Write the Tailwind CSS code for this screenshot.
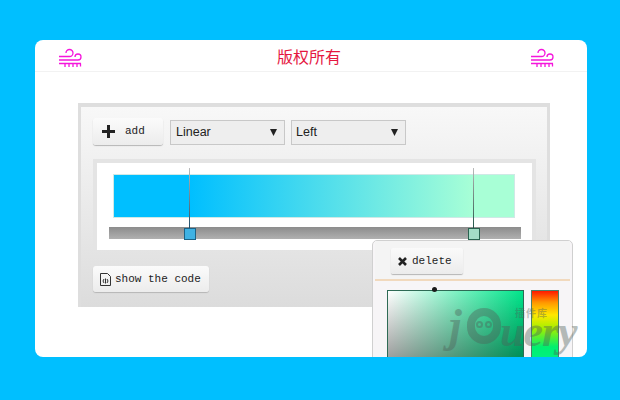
<!DOCTYPE html>
<html>
<head>
<meta charset="utf-8">
<script src="https://cdn.jsdelivr.net/npm/@tailwindcss/browser@4"></script>
</head>
<body class="m-0 w-[620px] h-[400px] overflow-hidden bg-[#00bfff] pt-[40px] pl-[35px] font-['Liberation_Sans','Noto_Sans_CJK_SC',sans-serif]">
<div class="relative w-[552px] h-[317px] bg-white rounded-[8px] overflow-hidden">
  <header class="h-[32px] border-b border-[#f2f2f2] pl-[23px] pr-[33px] pt-[8px] flex justify-between items-start">
    <svg class="w-[24px] h-[20px]" viewBox="0 0 24 20" fill="none" stroke="#f516dc" stroke-width="1.3"><path d="M1 8.500H11.500a3.500 3.500 0 1 0-3.500-3.500M1 12H20a3 3 0 1 0-3-3M1 15.500H23M7 15.500v3.500M11 15.500v3.500M15 15.500v3.500M19 15.500v3.500M22.500 15.500v3"/></svg>
    <span class="ml-[6px] mt-[1px] text-[16px] leading-[18px] text-[#e5173f]">版权所有</span>
    <svg class="w-[24px] h-[20px]" viewBox="0 0 24 20" fill="none" stroke="#f516dc" stroke-width="1.3"><path d="M1 8.500H11.500a3.500 3.500 0 1 0-3.500-3.500M1 12H20a3 3 0 1 0-3-3M1 15.500H23M7 15.500v3.500M11 15.500v3.500M15 15.500v3.500M19 15.500v3.500M22.500 15.500v3"/></svg>
  </header>

  <section class="ml-[43px] mt-[31px] w-[472px] h-[204px] border-x-[3px] border-t-[4px] border-[#dedede] bg-gradient-to-b from-[#f8f8f8] to-[#dcdcdc] pl-[12px] pt-[11px]">
    <div class="flex items-start gap-[7px]">
      <button class="w-[70px] h-[27px] rounded-[3px] bg-gradient-to-b from-[#fbfbfb] to-[#ececec] shadow-[0_1px_1px_#b5b5b5] flex items-center pl-[9px] gap-[10px] font-['Liberation_Mono',monospace] text-[11px] text-[#222]">
        <svg class="w-[13px] h-[13px]" viewBox="0 0 13 13" fill="#222"><path d="M5 0h3v5h5v3H8v5H5V8H0V5h5z"/></svg><span>add</span>
      </button>
      <div class="mt-[2px] w-[115px] h-[25px] bg-[#eeeeee] border border-[#c8c8c8] flex items-center justify-between pl-[5px] pr-[7px] text-[12.500px] text-[#222]">Linear<svg class="w-[7px] h-[7px]" viewBox="0 0 7 7" fill="#222"><path d="M0 0h7L3.500 7z"/></svg></div>
      <div class="-ml-[1px] mt-[2px] w-[115px] h-[25px] bg-[#eeeeee] border border-[#c8c8c8] flex items-center justify-between pl-[4px] pr-[7px] text-[12.500px] text-[#222]">Left<svg class="w-[7px] h-[7px]" viewBox="0 0 7 7" fill="#222"><path d="M0 0h7L3.500 7z"/></svg></div>
    </div>

    <div class="relative mt-[14px] w-[443px] h-[91px] border-x-[4px] border-t-[4px] border-[#e4e4e4] bg-white">
      <div class="absolute left-[16px] top-[11px] w-[402px] h-[44px] border border-[#cfe9e6] bg-[linear-gradient(to_right,#00bfff_0,#00bfff_76px,#a8ffd6_360px,#a8ffd6_100%)]"></div>
      <div class="absolute left-[12px] top-[64px] w-[412px] h-[12px] bg-gradient-to-b from-[#8c8c8c] to-[#b0b0b0]"></div>
      <div class="absolute left-[92px] top-[5px] w-px h-[60px] bg-gradient-to-b from-[#bbbbbb] to-[#1d4f6b]"></div>
      <div class="absolute left-[87px] top-[65px] w-[12px] h-[12px] border border-[#1c6387] bg-[#3fb2e3]"></div>
      <div class="absolute left-[376px] top-[5px] w-px h-[60px] bg-gradient-to-b from-[#bbbbbb] to-[#23564a]"></div>
      <div class="absolute left-[371px] top-[65px] w-[12px] h-[12px] border border-[#2a6350] bg-[#a3dcc6]"></div>
    </div>

    <button class="mt-[16px] w-[116px] h-[26px] rounded-[3px] bg-gradient-to-b from-[#fbfbfb] to-[#ececec] shadow-[0_1px_1px_#b5b5b5] flex items-center pl-[7px] gap-[4px] font-['Liberation_Mono',monospace] text-[11px] text-[#222] whitespace-nowrap">
      <svg class="w-[11px] h-[13px] shrink-0" viewBox="0 0 11 13" fill="none" stroke="#333"><path d="M.500.500h7l3 3v9H.500zM4 6 3 8l1 2M7 6l1 2-1 2M5.500 5.500v5"/></svg>show the code
    </button>
  </section>

  <aside class="absolute left-[337px] top-[200px] w-[201px] h-[130px] rounded-t-[5px] border border-[#d0d0d0] bg-[#f7f5f7]">
    <div class="h-[40px] mx-[2px] border-b-2 border-[#f1d9bd] bg-[#f4f4f4] pl-[16px] pt-[7px]">
      <button class="w-[72px] h-[26px] rounded-[2px] bg-gradient-to-b from-[#fafafa] to-[#ececec] shadow-[0_1px_1px_#b5b5b5] flex items-center pl-[7px] gap-[5px] font-['Liberation_Mono',monospace] text-[11px] text-[#222]">
        <svg class="w-[9px] h-[9px]" viewBox="0 0 9 9" stroke="#222" stroke-width="2.600"><path d="M1 1l7 7M8 1 1 8"/></svg>delete
      </button>
    </div>
    <div class="relative flex items-start gap-[7px] pl-[14px] pt-[9px]">
      <div class="w-[137px] h-[90px] border border-[#2e6b55] bg-[linear-gradient(to_bottom,transparent,rgba(0,0,0,0.38)_67px),linear-gradient(to_right,#ffffff,#00e58a)]"></div>
      <div class="w-[28px] h-[90px] border border-[#4d7f6a] bg-[linear-gradient(to_bottom,#ff1a00_0,#ff9c00_12px,#ffe800_24px,#a0f000_38px,#00f070_56px,#00f0a0_100%)]"></div>
      <div class="absolute left-[59px] top-[6px] w-[5px] h-[5px] rounded-full bg-[#1a1a1a]"></div>
    </div>
  </aside>

  <div class="absolute left-[411px] top-[262px] w-[135px] h-[50px] opacity-40 text-[#4f5f58] pointer-events-none">
    <span class="absolute left-[3px] top-[1px] font-['Liberation_Serif',serif] italic font-bold text-[46px] leading-[46px]">j</span>
    <span class="absolute left-[21px] top-[6px] w-[34px] h-[36px] rounded-full border-[8px] border-[#4f5f58]"></span>
    <span class="absolute left-[30px] top-[19px] w-[7px] h-[7px] rounded-full border-2 border-[#4f5f58]"></span>
    <span class="absolute left-[39px] top-[19px] w-[7px] h-[7px] rounded-full border-2 border-[#4f5f58]"></span>
    <span class="absolute left-[69px] top-[6px] text-[10px] leading-[11px] tracking-[1px] font-bold whitespace-nowrap">插件库</span>
    <span class="absolute left-[54px] top-[18px] font-['Liberation_Serif',serif] italic font-bold text-[44px] leading-[24px] tracking-[-1px] whitespace-nowrap">uery</span>
  </div>
</div>
</body>
</html>
